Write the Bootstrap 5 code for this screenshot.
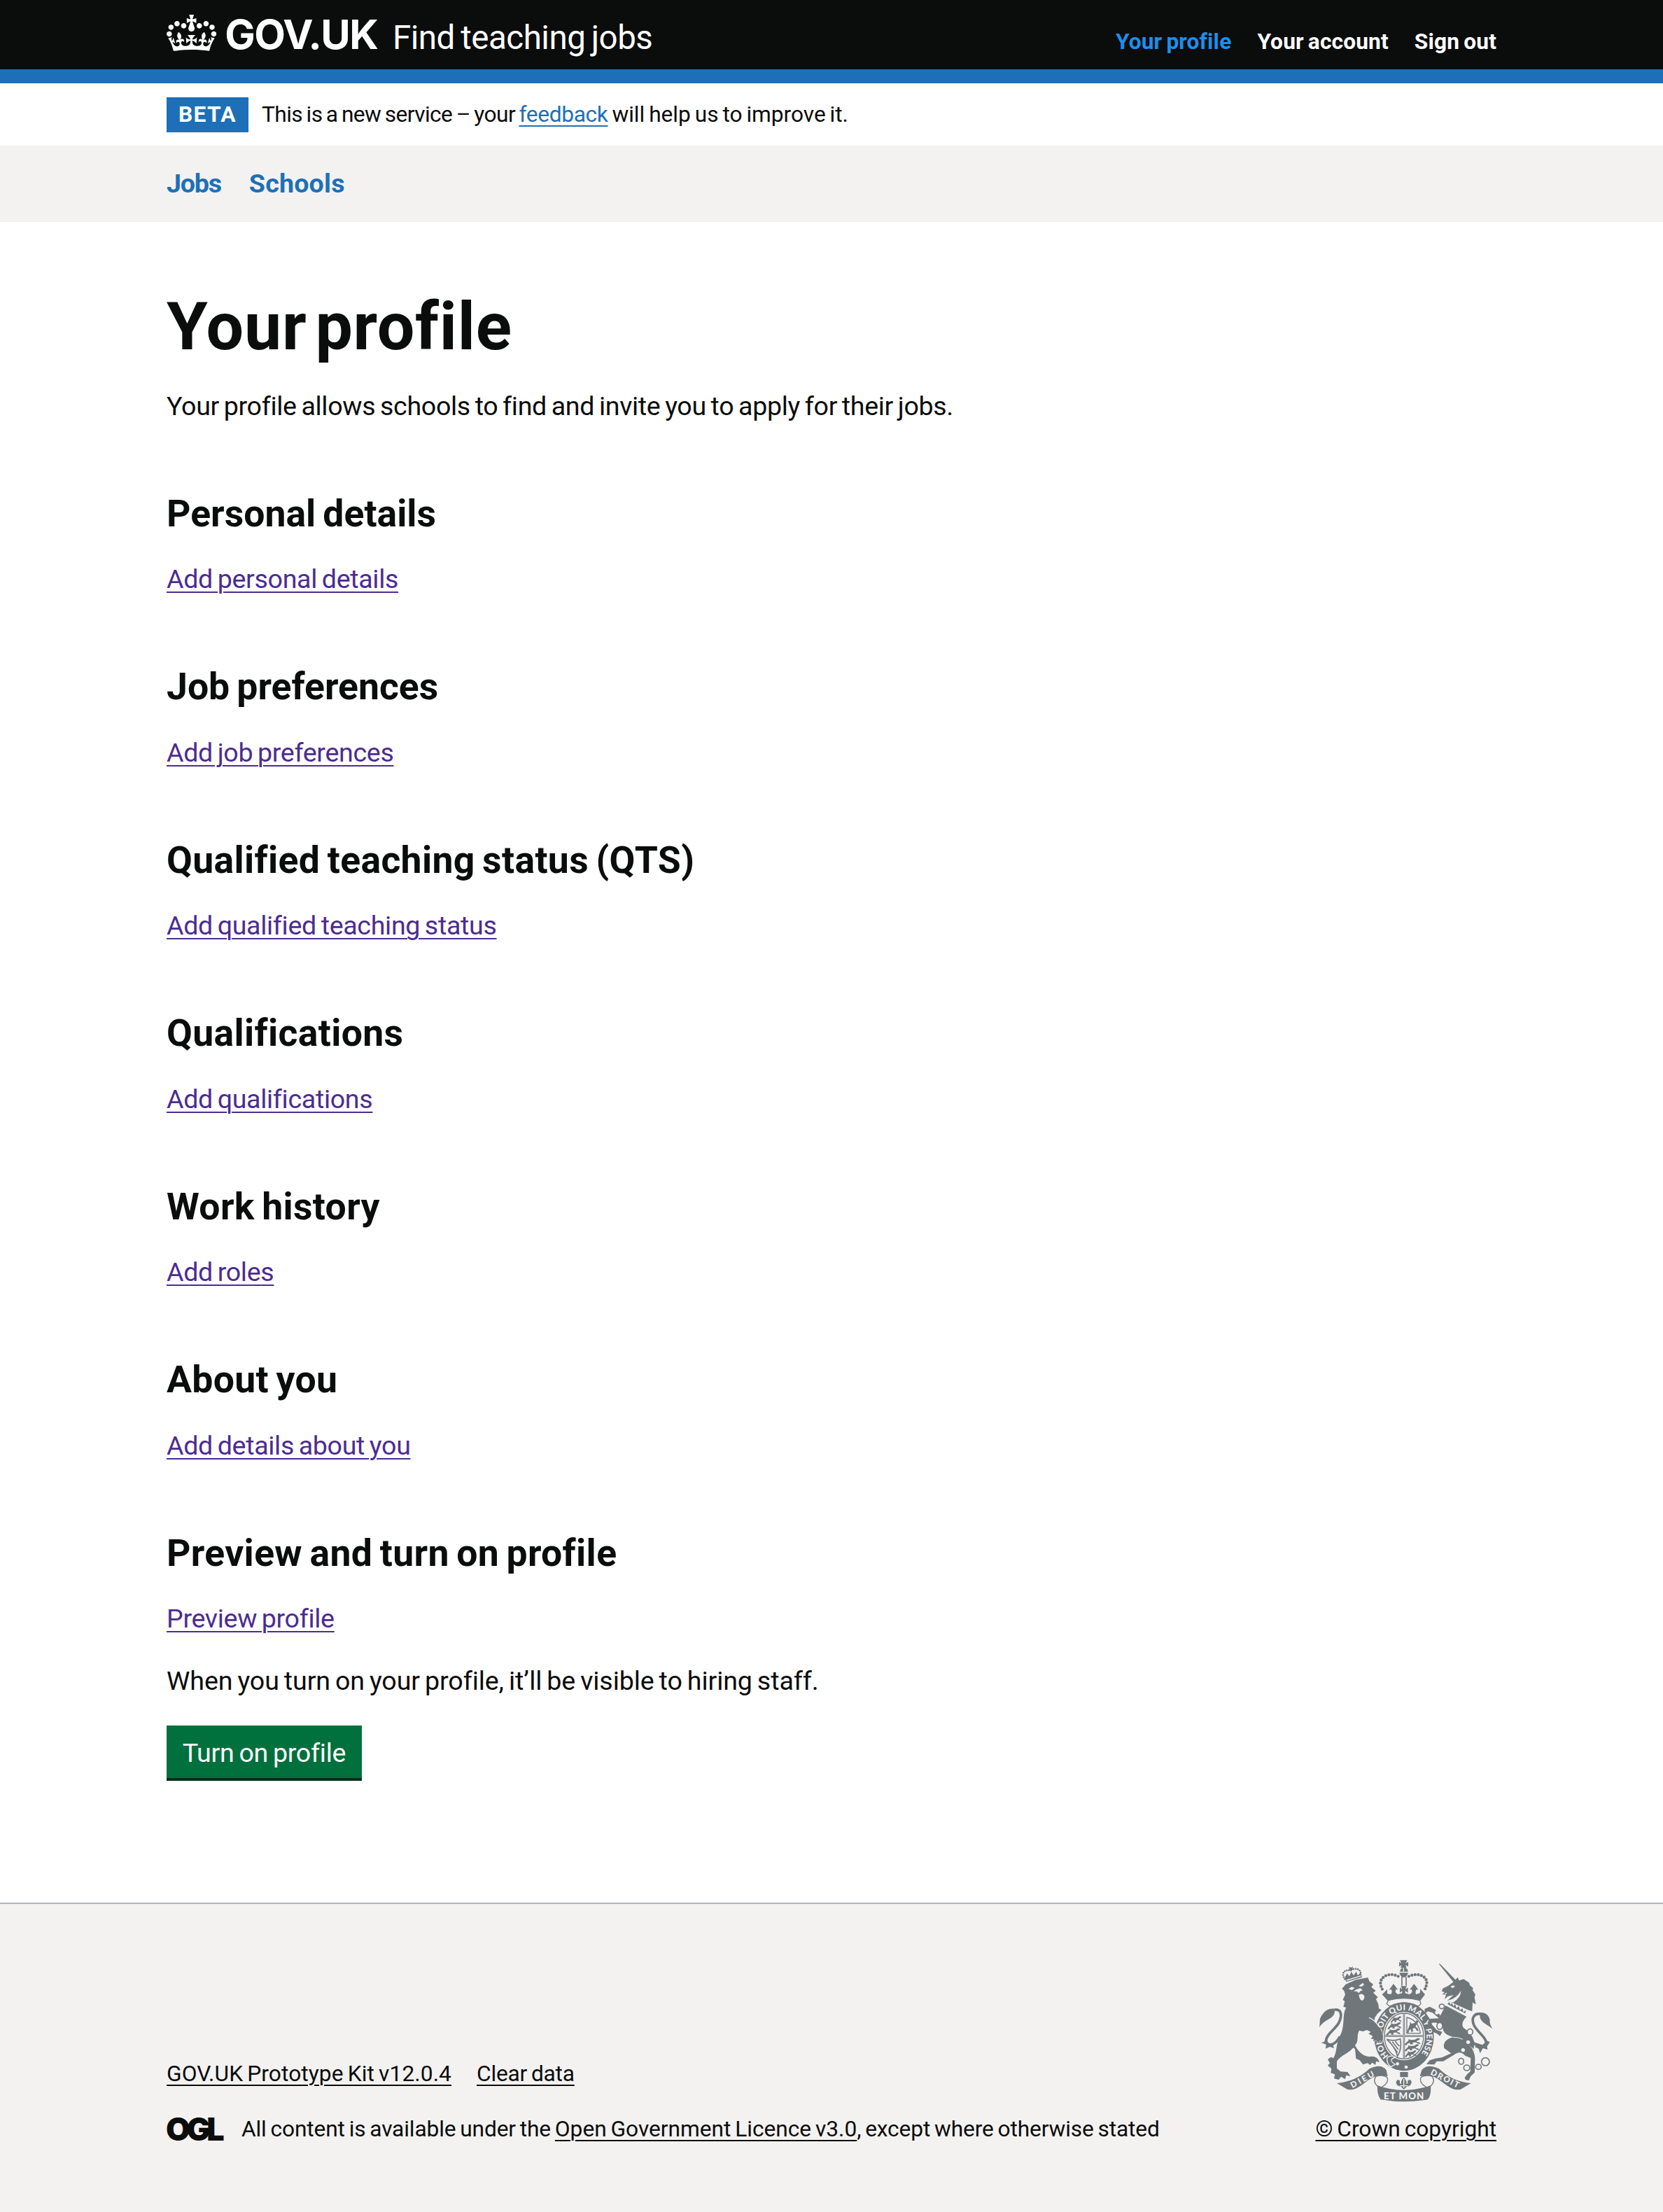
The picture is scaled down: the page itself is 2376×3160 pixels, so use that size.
<!DOCTYPE html>
<html lang="en">
<head>
<meta charset="utf-8">
<meta name="viewport" content="width=device-width, initial-scale=1">
<title>Your profile – Find teaching jobs</title>
<link href="https://cdn.jsdelivr.net/npm/bootstrap@5.3.0/dist/css/bootstrap.min.css" rel="stylesheet">
<style>
  body { font-family: Roboto, "Noto Sans", sans-serif; font-size: 37.6px; line-height: 49.5px; color: #0b0c0c; background: #fff; }
  a { text-decoration-thickness: 2px; text-underline-offset: 5px; }
  h2, p, a, span, button { word-spacing: -.06em; }
  .wrap { width: 1900px; margin: 0 auto; }
  .site-header { background: #0b0c0c; height: 119px; border-bottom: 20px solid #1d70b8; color: #fff; }
  .site-header .wrap { padding-top: 20.6px; line-height: 40px; }
  .site-header a { color: #fff; text-decoration: none; }
  .brand { width: 323px; white-space: nowrap; font: 700 58px/40px Inter, sans-serif; letter-spacing: -1.5px; }
  .brand svg { width: 71.3px; height: 52.4px; vertical-align: -3px; margin-right: 12px; }
  .service { font-size: 47.5px; letter-spacing: -.5px; }
  .top-nav { gap: 37px; font-size: 31.7px; font-weight: 700; letter-spacing: .13px; }
  .site-header .top-nav .current { color: #1d8feb; }
  .phase { height: 89px; font-size: 31.7px; line-height: 40px; letter-spacing: -.03px; }
  .phase .phase-lead { letter-spacing: -.57px; }
  .phase a { color: #1d70b8; letter-spacing: -.35px; }
  .phase-tag { width: 117px; height: 50px; margin-right: 19px; background: #1d70b8; color: #fff; font-weight: 700; line-height: 50px; letter-spacing: 1.3px; }
  .sub-nav { background: #f3f2f1; height: 109px; font-weight: 700; }
  .sub-nav .wrap { gap: 40px; letter-spacing: .2px; }
  .sub-nav a { color: #1d70b8; text-decoration: none; }
  .sub-nav .tight { letter-spacing: -1.2px; }
  main { padding: 100px 0 178px; }
  h1 { font-size: 95px; line-height: 99px; font-weight: 700; letter-spacing: .75px; word-spacing: -.13em; margin: 0 0 39.9px; }
  h2 { font-size: 53.5px; line-height: 59.4px; font-weight: 700; letter-spacing: .02px; margin: 98.6px 0 40px; }
  h2.wide { letter-spacing: .35px; }
  main p { margin: 0 0 39.5px; letter-spacing: -.08px; }
  main p.intro { letter-spacing: -.32px; }
  main a { color: #4c2c92; letter-spacing: -.32px; }
  .btn-start, .btn-start:hover { width: 279px; height: 75px; padding: 0; margin-top: -1.5px; border: 0; border-radius: 0; background: #00703c; color: #fff; font-size: 37.6px; line-height: 78px; letter-spacing: -.25px; box-shadow: 0 4px 0 #002d18; display: block; }
  .site-footer { background: #f3f2f1; border-top: 2px solid #b1b4b6; padding: 79px 0 100px; font-size: 31.7px; line-height: 40px; }
  .site-footer a { color: #0b0c0c; }
  .foot-links { gap: 36px; margin-bottom: 39px; letter-spacing: .1px; }
  .foot-links .tight { letter-spacing: -.2px; }
  .ogl { width: 108px; margin-left: -1px; font: 900 45px/40px Inter, sans-serif; letter-spacing: -5.3px; }
  .licence { letter-spacing: -.13px; }
  .licence a { letter-spacing: -.03px; }
  .arms { width: 248.3px; height: 204px; display: block; margin-bottom: 19px; }
</style>
</head>
<body>
<header class="site-header">
  <div class="wrap d-flex align-items-baseline">
    <a href="#" class="brand"><svg viewBox="0 0 132 97" fill="#fff" aria-hidden="true"><path fill-rule="evenodd" d="M25 30.2c3.5 1.5 7.7-.2 9.1-3.7 1.5-3.6-.2-7.8-3.9-9.2-3.6-1.4-7.6.3-9.1 3.9-1.4 3.5.3 7.5 3.9 9zM9 39.5c3.6 1.5 7.8-.2 9.2-3.7 1.5-3.6-.2-7.8-3.9-9.1-3.6-1.5-7.6.2-9.1 3.8-1.4 3.5.3 7.5 3.8 9zM4.4 57.2c3.5 1.5 7.7-.2 9.1-3.8 1.5-3.6-.2-7.7-3.9-9.1-3.5-1.5-7.6.3-9.1 3.8-1.4 3.5.3 7.6 3.9 9.1zm38.3-21.4c3.5 1.5 7.7-.2 9.1-3.8 1.5-3.6-.2-7.7-3.9-9.1-3.6-1.5-7.6.3-9.1 3.8-1.3 3.6.4 7.7 3.9 9.1zm64.4-5.6c-3.6 1.5-7.8-.2-9.1-3.7-1.5-3.6.2-7.8 3.8-9.2 3.6-1.4 7.7.3 9.2 3.9 1.3 3.5-.4 7.5-3.9 9zm15.9 9.3c-3.6 1.5-7.7-.2-9.1-3.7-1.5-3.6.2-7.8 3.7-9.1 3.6-1.5 7.7.2 9.2 3.8 1.5 3.5-.3 7.5-3.8 9zm4.7 17.7c-3.6 1.5-7.8-.2-9.2-3.8-1.5-3.6.2-7.7 3.9-9.1 3.6-1.5 7.7.3 9.2 3.8 1.3 3.5-.4 7.6-3.9 9.1zM89.3 35.8c-3.6 1.5-7.8-.2-9.2-3.8-1.4-3.6.2-7.7 3.9-9.1 3.6-1.5 7.7.3 9.2 3.8 1.4 3.6-.3 7.7-3.9 9.1zM69.7 17.7l8.9 4.7V9.3l-8.9 2.8c-.2-.3-.5-.6-.9-.9L72.4 0H59.6l3.5 11.2c-.3.3-.6.5-.9.9l-8.8-2.8v13.1l8.8-4.7c.3.3.6.7.9.9l-5 15.4v.1c-.2.8-.4 1.6-.4 2.4 0 4.1 3.1 7.5 7 8.1h.2c.3 0 .7.1 1 .1.4 0 .7 0 1-.1h.2c4-.6 7.1-4.1 7.1-8.1 0-.8-.1-1.7-.4-2.4V34l-5.1-15.4c.4-.2.7-.6 1-.9zM66 92.8c16.9 0 32.8 1.1 47.1 3.2 4-16.9 8.9-26.7 14-33.5l-9.6-3.4c1 4.9 1.1 7.2 0 10.2-1.5-1.4-3-4.3-4.2-8.7L108.6 76c2.8-2 5-3.2 7.5-3.3-4.4 9.4-10 11.9-13.6 11.2-4.3-.8-6.3-4.6-5.6-7.9 1-4.7 5.7-5.9 8-.5 4.3-8.7-3-11.4-7.6-8.8 7.1-7.2 7.9-13.5 2.1-21.1-8 6.1-8.1 12.3-4.5 20.8-4.7-5.4-12.1-2.5-9.5 6.2 3.4-5.2 7.9-2 7.2 3.1-.6 4.3-6.4 7.8-13.5 7.2-10.3-.9-10.9-8-11.2-13.8 2.5-.5 7.1 1.8 11 7.3L80.2 60c-4.1 4.4-8 5.3-12.3 5.4 1.4-4.4 8-11.6 8-11.6H55.5s6.4 7.2 7.9 11.6c-4.2-.1-8-1-12.3-5.4l1.4 16.4c3.9-5.5 8.5-7.7 10.9-7.3-.3 5.8-.9 12.8-11.1 13.8-7.2.6-12.9-2.9-13.5-7.2-.7-5 3.8-8.3 7.1-3.1 2.7-8.7-4.6-11.6-9.4-6.2 3.7-8.5 3.6-14.7-4.6-20.8-5.8 7.6-5 13.9 2.2 21.1-4.7-2.6-11.9.1-7.7 8.8 2.3-5.5 7.1-4.2 8.1.5.7 3.3-1.3 7.1-5.7 7.9-3.5.7-9-1.8-13.5-11.2 2.5.1 4.7 1.3 7.5 3.3l-4.7-15.4c-1.2 4.4-2.7 7.2-4.3 8.7-1.1-3-.9-5.3 0-10.2l-9.5 3.4c5 6.9 9.9 16.7 14 33.5 14.8-2.1 30.8-3.2 47.7-3.2z"/></svg>GOV.UK</a>
    <a href="#" class="service">Find teaching jobs</a>
    <nav class="top-nav d-flex ms-auto"><a href="#" class="current">Your profile</a><a href="#">Your account</a><a href="#">Sign out</a></nav>
  </div>
</header>
<div class="wrap phase d-flex align-items-center">
  <strong class="phase-tag text-center">BETA</strong>
  <span><span class="phase-lead">This is a new service – your </span><a href="#">feedback</a> will help us to improve it.</span>
</div>
<nav class="sub-nav"><div class="wrap h-100 d-flex align-items-center"><a href="#" class="tight">Jobs</a><a href="#">Schools</a></div></nav>
<main class="wrap">
  <h1>Your profile</h1>
  <p class="intro">Your profile allows schools to find and invite you to apply for their jobs.</p>
  <h2>Personal details</h2>
  <p><a href="#">Add personal details</a></p>
  <h2>Job preferences</h2>
  <p><a href="#">Add job preferences</a></p>
  <h2 class="wide">Qualified teaching status (QTS)</h2>
  <p><a href="#">Add qualified teaching status</a></p>
  <h2 class="wide">Qualifications</h2>
  <p><a href="#">Add qualifications</a></p>
  <h2 class="wide">Work history</h2>
  <p><a href="#">Add roles</a></p>
  <h2 class="wide">About you</h2>
  <p><a href="#">Add details about you</a></p>
  <h2 class="wide">Preview and turn on profile</h2>
  <p><a href="#">Preview profile</a></p>
  <p>When you turn on your profile, it’ll be visible to hiring staff.</p>
  <button type="button" class="btn btn-start">Turn on profile</button>
</main>
<footer class="site-footer">
  <div class="wrap d-flex align-items-end justify-content-between">
    <div>
      <div class="foot-links d-flex"><a href="#">GOV.UK Prototype Kit v12.0.4</a><a href="#" class="tight">Clear data</a></div>
      <div class="d-flex align-items-center"><span class="ogl">OGL</span><span class="licence">All content is available under the <a href="#">Open Government Licence v3.0</a>, except where otherwise stated</span></div>
    </div>
    <div class="d-flex flex-column align-items-center">
      <svg class="arms" viewBox="75 55 745 612" fill="#6f777b" aria-hidden="true">
        <defs>
          <path id="motto" d="M372 469A97 113 0 1 1 504 469"/>
          <g id="beast"><path d="M0 10l5-7-2-3 6 3 8-1 5-4 5 1-2 4-4 2-1 3 5 1 3 5-5-1-5-4-6 1 1 4-5 1-1-4-4 1-3 5-4-1 3-5z"/></g>
        </defs>
        <!-- royal crown -->
        <path d="M420 59h32l-8 13 12-6v20l-12-6 5 11h-26l5-11-11 6V66l11 6zM421 108q0-17 17-17 17 0 17 17zM418 113h38q-6 20-20 20-12 0-18-20z"/>
        <path d="M436 92v16" stroke="#f3f2f1" stroke-width="4"/>
        <path d="M429 130v38M447 130v38" stroke="#6f777b" stroke-width="5"/>
        <path d="M413 128C375 108 330 130 338 166 341 178 345 186 352 192M459 128C500 108 545 130 534 166 531 178 527 186 521 192" fill="none" stroke="#6f777b" stroke-width="13" stroke-linecap="round" stroke-dasharray="0 13.7"/>
        <path d="M344 206L366 184 366 202 382 205Q390 190 382 184L374 186Q384 172 393 160 402 172 412 186L404 184Q396 198 412 205L430 200 430 190 420 198V176L431 184 424 170h26l-7 14 12-8v22l-12-8v10L460 205Q478 198 470 184L462 186Q472 172 481 160 490 172 500 186L492 184Q484 196 490 205L506 200 508 182 528 206 508 232Q438 210 368 232z"/>
        <path d="M370 231Q438 212 506 231L510 246 500 256Q438 228 376 256L364 246z" fill="#f3f2f1" stroke="#6f777b" stroke-width="4"/>
        <!-- garter and shield -->
        <ellipse cx="438" cy="386" rx="128" ry="147"/>
        <ellipse cx="438" cy="384" rx="90" ry="104" fill="#f3f2f1"/>
        <ellipse cx="438" cy="384" rx="84" ry="98" fill="none" stroke="#6f777b" stroke-width="4"/>
        <path d="M438 286v196M354 384h168" stroke="#6f777b" stroke-width="8"/>
        <path d="M438 286v196M354 384h168" stroke="#f3f2f1" stroke-width="2"/>
        <use href="#beast" transform="translate(386 302) scale(1.5)"/><use href="#beast" transform="translate(374 328) scale(1.9 1.6)"/><use href="#beast" transform="translate(368 354) scale(2 1.6)"/><use href="#beast" transform="translate(448 396) scale(2.2 1.6)"/><use href="#beast" transform="translate(448 422) scale(2 1.6)"/><use href="#beast" transform="translate(448 448) scale(1.6)"/><use href="#beast" transform="translate(456 322) scale(1.6 3)"/>
        <path d="M450 304Q500 316 508 372H450z" fill="none" stroke="#6f777b" stroke-width="4"/>
        <path d="M364 398Q392 408 422 396Q430 440 410 470Q402 432 364 398zM376 408l34 46M388 408l26 34M400 406l18 22" fill="none" stroke="#6f777b" stroke-width="5"/>
        <text font-family="Lato, sans-serif" font-weight="900" font-size="35" fill="#f3f2f1"><textPath href="#motto" textLength="498" lengthAdjust="spacing">HONI SOIT QUI MAL Y PENSE</textPath></text>
        <path d="M366 476Q382 464 400 474L386 482Q378 492 400 506L382 516Q362 502 366 476z" stroke="#f3f2f1" stroke-width="4"/>
        <g fill="#f3f2f1"><circle cx="410" cy="503" r="7"/><circle cx="447" cy="517" r="7"/></g>
        <!-- lion and its crown -->
        <path d="M184 133L190 152 258 132 252 112 240 124 233 108 222 124 212 108 204 128 194 116z"/>
        <path d="M192 145L254 126" stroke="#f3f2f1" stroke-width="4"/>
        <path d="M184 140C168 115 180 100 206 102C235 88 258 98 251 126" fill="none" stroke="#6f777b" stroke-width="8" stroke-linecap="round" stroke-dasharray="0 9.5"/>
        <path d="M203 87l8 4 8-6-2 10 6 4-9 2-2 7-6-6-7 1 4-7z"/>
        <path stroke="#f3f2f1" stroke-width="3" paint-order="stroke" d="M172 181L188 162 232 143 283 133 290 150 306 162 298 174 317 190 306 198 326 218 318 226 328 248 330 266 342 272 324 288 313 305 311 322C330 338 343 356 348 384L346 412 336 402 328 414 318 402 306 406 308 396 296 396 304 384 286 374 296 366 278 358 262 364 246 360C236 378 242 392 236 412L228 424C242 448 256 468 290 473 310 468 326 476 333 496L318 492 316 508 302 498 292 508 282 500 262 506 248 488 232 480 228 440 220 434C204 456 168 466 150 492L150 522 166 536 196 538 209 556 190 552 186 569 168 558 158 571 138 566 142 548 124 542 127 524 111 510 120 500 111 484 124 474 136 478C152 450 146 412 164 382 186 344 172 290 190 262L178 258 184 236 176 228 186 206 181 190z"/>
        <path d="M288 305C306 312 322 328 332 346" fill="none" stroke="#f3f2f1" stroke-width="4"/>
        <path d="M200 182l14-9 13 5-13 9zM243 170l19-14 5 8-10 8zM222 192l12-8 18-5 8 10-9 2-7 9-9-8zM244 208q15-10 24 4 2 16-10 20-10-2-14-24z" fill="#f3f2f1"/>
        <path d="M140 271C174 268 172 300 158 328 140 358 106 376 104 402 106 430 140 428 163 386" fill="none" stroke="#6f777b" stroke-width="11"/>
        <path d="M140 267C148 312 104 304 75 346 80 320 72 312 88 292 100 274 116 264 140 267zM104 395L94 410 82 412 104 420 102 438 120 430 138 436 134 424 148 412 130 420 108 412z"/>
        <!-- unicorn -->
        <path d="M586 73L594 76 666 150 654 158z"/>
        <path d="M651 151L668 132 674 146 694 140 718 156 720 166 734 178 732 188 744 206 740 218 746 248 732 240 730 278 712 272 624 232 650 208 626 214 612 226 618 206 602 206 612 196 600 192 604 180 628 168z"/>
        <path d="M638 170l14-3 4 6-12 6zM612 200l10-1-4 7zM624 232Q662 226 682 190 682 220 648 240z" fill="#f3f2f1"/>
        <path d="M628 232l92 50-16 18-92-50z" fill="#f3f2f1"/>
        <path d="M632 238l6 12 6-8 5 14 8-9 6 18 10-10 5 18 10-9 4 17 12-8-4 14-76-40z"/>
        <path d="M616 253L706 301C690 318 682 334 694 350 722 366 736 392 740 414L736 440 720 424C738 446 744 470 742 492L741 540 724 556 716 574 702 572 698 562 710 546 722 536 724 478 700 468C684 452 672 450 650 466L606 492 578 492 568 506 534 505 548 488 572 480 600 476 640 458 610 436C604 412 618 396 650 388 616 380 604 366 604 346 600 330 566 322 554 330L578 358 602 366 592 384 580 374 562 366 540 330 546 310 588 308 560 284 540 278 528 290 526 268 548 258 572 270 594 296z"/>
        <path d="M648 389Q672 388 690 398" fill="none" stroke="#f3f2f1" stroke-width="3"/>
        <path d="M768 290C740 284 724 306 738 338 752 368 796 392 790 420 780 444 752 424 732 412" fill="none" stroke="#6f777b" stroke-width="11"/>
        <path d="M758 284C782 280 800 290 806 314 804 330 810 340 818 354 800 334 756 326 764 288zM794 404L806 410 794 428 796 442 776 436 764 458 758 438 740 430 756 424 744 412 774 422z"/>
        <g fill="#f3f2f1" stroke="#6f777b" stroke-width="5"><ellipse cx="600" cy="257" rx="11" ry="10"/><ellipse cx="591" cy="341" rx="12" ry="15"/><ellipse cx="721" cy="366" rx="12" ry="13"/><ellipse cx="683" cy="492" rx="11" ry="13"/><ellipse cx="707" cy="520" rx="13" ry="12"/><ellipse cx="757" cy="516" rx="12" ry="11"/><circle cx="787" cy="494" r="17"/></g>
        <g fill="#f3f2f1"><circle cx="713" cy="410" r="8"/><circle cx="691" cy="444" r="8"/><circle cx="579" cy="283" r="8"/></g>
        <!-- motto ribbon -->
        <path d="M150 586Q230 580 290 524 340 500 362 530L368 556 330 552 318 556C270 572 244 622 196 613zM725 586Q645 580 588 524 536 500 514 530L506 556 546 552 558 556C606 572 632 622 680 613z"/>
        <g fill="#f3f2f1" stroke="#6f777b" stroke-width="4"><path d="M318 556Q350 548 366 562 374 584 344 602L330 604Q300 580 318 556zM558 556Q526 548 510 562 502 584 532 602L546 604Q576 580 558 556z"/></g>
        <path d="M324 596Q438 636 552 596 556 636 540 656 438 674 338 656 322 636 324 596z"/>
        <path d="M421 538h34v22h-34zM437 562Q452 576 448 590 456 590 454 574 470 566 470 584 466 600 450 600L437 614 425 600Q408 600 404 584 406 566 420 574 418 590 427 590 422 576 437 562z"/>
        <path d="M437 568v38M420 597h34" stroke="#f3f2f1" stroke-width="4"/>
        <g font-family="Lato, sans-serif" font-weight="900" font-size="40" fill="#f3f2f1"><text x="351" y="655" textLength="172">ET MON</text><text transform="translate(217 608) rotate(-29)" font-size="35" textLength="110">DIEU</text><text transform="translate(549 547) rotate(27)" font-size="35" textLength="132">DROIT</text></g>
      </svg>
      <a href="#">© Crown copyright</a>
    </div>
  </div>
</footer>
<script src="https://cdn.jsdelivr.net/npm/bootstrap@5.3.0/dist/js/bootstrap.bundle.min.js"></script>
</body>
</html>
